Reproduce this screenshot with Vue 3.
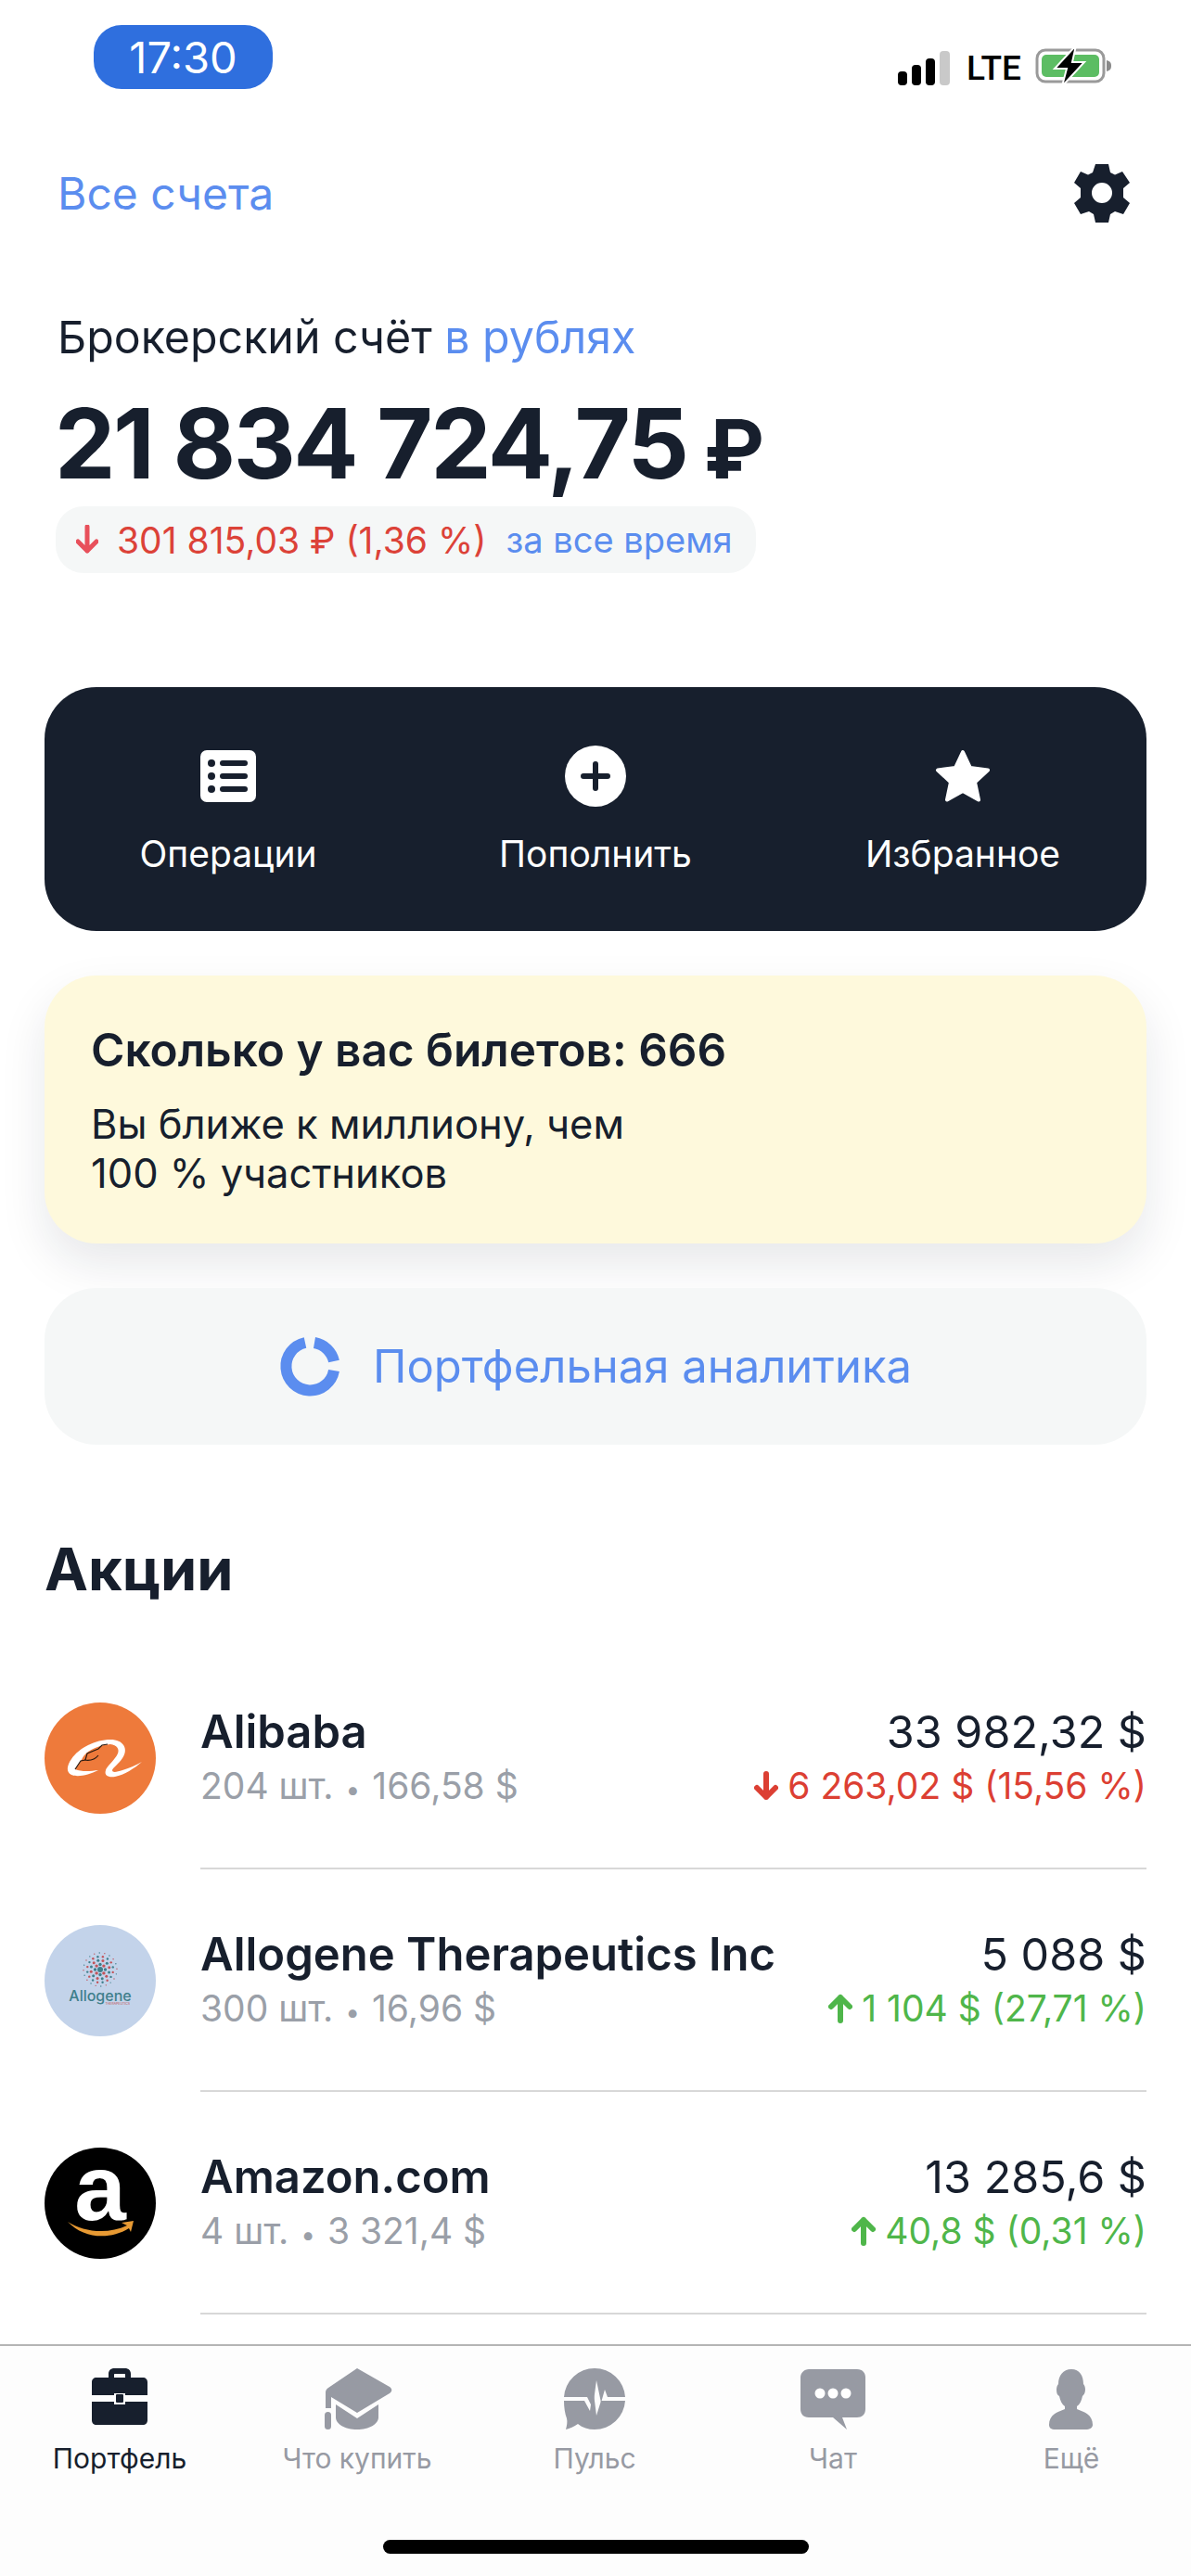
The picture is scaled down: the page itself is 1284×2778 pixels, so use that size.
<template>
  <div class="screen">
    <div class="status">
      <div class="time">17:30</div>
      <div class="status-right">
        <svg width="60" height="38" viewBox="0 0 60 38">
          <rect x="1" y="22" width="10" height="15" rx="4" fill="#000"/>
          <rect x="16" y="15" width="10" height="22" rx="4" fill="#000"/>
          <rect x="31" y="8" width="10" height="29" rx="4" fill="#000"/>
          <rect x="46" y="0" width="11" height="37" rx="4" fill="#c9c9c9"/>
        </svg>
        <span class="lte">LTE</span>
        <svg width="84" height="44" viewBox="0 0 84 44">
          <rect x="2" y="5" width="72" height="34" rx="9" fill="#fff" stroke="#9a9a9a" stroke-width="3"/>
          <rect x="7" y="10" width="62" height="24" rx="5" fill="#5cbd63"/>
          <path d="M77 16c4 1 5 3 5 6s-1 5-5 6z" fill="#8a8a8a"/>
          <path d="M44 0 21 25h13l-5 19 24-26H40z" fill="#000" stroke="#fff" stroke-width="2"/>
        </svg>
      </div>
    </div>

    <div class="main">
      <div class="topbar">
        <a class="link accounts">Все счета</a>
        <svg width="64" height="64" viewBox="0 0 64 64">
          <path fill="#171f2d" fill-rule="evenodd" d="M25 1h14l2 9 5 2.500 8-3.500 8 12-7 6v10l7 6-7 12-9-3-5 3-2 9H25l-2-9-5-3-9 3-7-12 7-6V27l-7-6 7-12 8 3.500 5-2.500zM32 21a11 11 0 1 0 0 22 11 11 0 0 0 0-22z"/>
        </svg>
      </div>

      <div class="account">
        <div class="account-title">Брокерский счёт <span class="link">в рублях</span></div>
        <div class="amount">21 834 724,75 <span class="rub">₽</span></div>
        <div class="change-pill">
          <svg class="arrow" width="24" height="32" viewBox="0 0 24 32"><path d="M12 2v26M2 18l10 10 10-10" fill="none" stroke="#e8505b" stroke-width="5" stroke-linecap="round" stroke-linejoin="round"/></svg>
          <span class="change-val">301 815,03 ₽ (1,36 %)</span>
          <span class="link change-when">за все время</span>
        </div>
      </div>

      <div class="actions">
        <div class="action">
          <div class="action-icon">
            <svg width="60" height="56" viewBox="0 0 60 56">
              <rect width="60" height="56" rx="7" fill="#fff"/>
              <g fill="#171f2d">
                <circle cx="12" cy="14" r="4"/><circle cx="12" cy="28" r="4"/><circle cx="12" cy="42" r="4"/>
                <rect x="21" y="11" width="30" height="6" rx="3"/><rect x="21" y="25" width="30" height="6" rx="3"/><rect x="21" y="39" width="30" height="6" rx="3"/>
              </g>
            </svg>
          </div>
          <span>Операции</span>
        </div>
        <div class="action">
          <div class="action-icon">
            <svg width="66" height="66" viewBox="0 0 66 66">
              <circle cx="33" cy="33" r="33" fill="#fff"/>
              <path d="M33 20v26M20 33h26" stroke="#171f2d" stroke-width="6" stroke-linecap="round"/>
            </svg>
          </div>
          <span>Пополнить</span>
        </div>
        <div class="action">
          <div class="action-icon">
            <svg width="60" height="58" viewBox="0 0 60 58">
              <path d="M30 3l8 17 19 2.500-14 13 4 19-17-9.500-17 9.500 4-19-14-13 19-2.500z" fill="#fff" stroke="#fff" stroke-width="4" stroke-linejoin="round"/>
            </svg>
          </div>
          <span>Избранное</span>
        </div>
      </div>

      <div class="promo">
        <div class="promo-title">Сколько у вас билетов: 666</div>
        <div class="promo-text">Вы ближе к миллиону, чем<br>100 % участников</div>
      </div>

      <div class="analytics">
        <svg width="66" height="66" viewBox="0 0 66 66">
          <path d="M28 7A26 26 0 1 0 59 37" fill="none" stroke="#5b8def" stroke-width="12"/>
          <path d="M38 7a26 26 0 0 1 21 20" fill="none" stroke="#5b8def" stroke-width="12"/>
        </svg>
        <span class="link">Портфельная аналитика</span>
      </div>

      <h2 class="section">Акции</h2>

      <div class="stock" v-for="s in stocks" :key="s.name">
        <div class="logo" :class="s.logo">
          <svg v-if="s.logo === 'ali'" width="120" height="120" viewBox="0 0 120 120">
            <path d="M71 40C85 40 91 50 84 60 80 66 74 70 73 73 73 76 78 75 84 73 91 71 98 68 105 64 97 71 86 78 76 80 69 81 64 79 66 73 66 70 76 62 79 55 81 50 78 46 71 45 60 46 48 50 42 58L38 65 33 72C40 75 50 74 58 73 48 78 36 81 29 78 23 75 24 68 29 61 37 49 55 40 71 40Z" fill="#fff"/>
            <path d="M33 72 39 63 44 62 46 55 58 50 62 46 68 45 M43 62C49 63 54 62 58 57" fill="none" stroke="#2a1a10" stroke-width="1.200"/>
          </svg>
          <svg v-else-if="s.logo === 'allo'" width="120" height="120" viewBox="0 0 120 120">
            <circle v-for="(d, i) in alloDots" :key="i" :cx="d.x" :cy="d.y" :r="d.r" :fill="d.c"/>
            <text x="60" y="82" text-anchor="middle" class="allo-text">Allogene</text>
            <text x="92" y="86" text-anchor="end" class="allo-sub">THERAPEUTICS</text>
          </svg>
          <svg v-else width="120" height="120" viewBox="0 0 120 120">
            <text x="60" y="78" text-anchor="middle" class="amz-text">a</text>
            <path d="M25 80C42 91 68 94 89 84L83 81 96 79 93 91 91 87C70 100 42 98 25 80Z" fill="#e89a33"/>
          </svg>
        </div>
        <div class="stock-body">
          <div class="stock-left">
            <div class="stock-name">{{ s.name }}</div>
            <div class="stock-sub">{{ s.qty }} шт. <span class="dot">•</span> {{ s.price }} $</div>
          </div>
          <div class="stock-right">
            <div class="stock-total">{{ s.total }} $</div>
            <div class="stock-change" :class="s.up ? 'up' : 'down'">
              <svg width="26" height="32" viewBox="0 0 26 32">
                <path v-if="s.up" d="M13 29V4M3 14 13 4l10 10" fill="none" stroke="currentColor" stroke-width="6" stroke-linecap="round" stroke-linejoin="round"/>
                <path v-else d="M13 3v25M3 18l10 10 10-10" fill="none" stroke="currentColor" stroke-width="6" stroke-linecap="round" stroke-linejoin="round"/>
              </svg>
              <span>{{ s.change }}</span>
            </div>
          </div>
        </div>
      </div>
    </div>

    <div class="tabbar">
      <div class="tabs">
        <div class="tab active">
          <svg width="70" height="70" viewBox="0 0 70 70">
            <path fill="currentColor" fill-rule="evenodd" d="M23 12V8c0-4 3-6 6-6h12c3 0 6 2 6 6v4h13c3 0 5 2 5 5v14H41v-2h-12v2H5V17c0-3 2-5 5-5zm6-3v3h12V9c0-.6-.4-1-1-1H30c-.6 0-1 .4-1 1zM5 38h24v3h12v-3h24v20c0 3-2 5-5 5H10c-3 0-5-2-5-5z"/>
            <rect x="31" y="30" width="8" height="9" rx="1" fill="currentColor"/>
          </svg>
          <span>Портфель</span>
        </div>
        <div class="tab">
          <svg width="80" height="70" viewBox="0 0 80 70">
            <path fill="currentColor" d="M40 2 75 22c3 2 3 5 0 7L40 50 12 33v12l-6 0V28c0-2 1-4 3-5z"/>
            <path fill="currentColor" d="M17 41 40 56 63 41v14c0 7-10 13-23 13S17 62 17 55z"/>
            <rect x="5" y="49" width="7" height="19" rx="3.500" fill="currentColor"/>
          </svg>
          <span>Что купить</span>
        </div>
        <div class="tab">
          <svg width="70" height="70" viewBox="0 0 70 70">
            <path fill="currentColor" d="M35 2a33 33 0 0 1 33 31H49l-3-8-4 14-5-24-4 30-6-12-3 0H2A33 33 0 0 1 35 2z"/>
            <path fill="currentColor" d="M2 37h22l6 11 4-27-1 0 4 32 5-16 3 0h23a33 33 0 0 1-33 31c-7 0-13-2-18-6-4 3-9 5-13 6 1-4 2-8 1-12-2-5-3-12-3-19z"/>
          </svg>
          <span>Пульс</span>
        </div>
        <div class="tab">
          <svg width="76" height="70" viewBox="0 0 76 70">
            <path fill="currentColor" d="M12 3h52c6 0 9 4 9 9v34c0 6-4 9-9 9H48l5 13-15-13H12c-6 0-9-4-9-9V12c0-5 4-9 9-9z"/>
            <circle cx="24" cy="29" r="5.500" fill="#fff"/><circle cx="38" cy="29" r="5.500" fill="#fff"/><circle cx="52" cy="29" r="5.500" fill="#fff"/>
          </svg>
          <span>Чат</span>
        </div>
        <div class="tab">
          <svg width="50" height="70" viewBox="0 0 50 70">
            <path fill="currentColor" d="M25 3c9 0 13 7 13 16 1 1 2 3 2 6 0 4-2 6-3 7-1 5-3 9-6 11v3c8 3 17 6 17 17 0 3-3 5-8 5H8c-5 0-7-2-7-5 0-11 9-14 17-17v-3c-3-2-5-6-6-11-2-1-3-3-3-7 0-3 1-5 2-6 0-9 5-16 14-16z"/>
          </svg>
          <span>Ещё</span>
        </div>
      </div>
      <div class="home"></div>
    </div>
  </div>
</template>

<script setup>
const stocks = [
  { name: 'Alibaba', logo: 'ali', qty: '204', price: '166,58', total: '33 982,32', change: '6 263,02 $ (15,56 %)', up: false },
  { name: 'Allogene Therapeutics Inc', logo: 'allo', qty: '300', price: '16,96', total: '5 088', change: '1 104 $ (27,71 %)', up: true },
  { name: 'Amazon.com', logo: 'amz', qty: '4', price: '3 321,4', total: '13 285,6', change: '40,8 $ (0,31 %)', up: true },
];

// кружок из точек для логотипа Allogene
const alloDots = [{ x: 60, y: 48, r: 3, c: '#3f7f8c' }];
[[5.5, 8, 1.7], [10, 12, 1.5], [14, 16, 1.2], [18, 20, 0.7]].forEach(([dist, count, r], ring) => {
  for (let i = 0; i < count; i++) {
    const a = (i / count) * Math.PI * 2 + ring * 0.3;
    alloDots.push({
      x: 60 + Math.cos(a) * dist,
      y: 48 + Math.sin(a) * dist,
      r,
      c: i % 2 ? '#c2545a' : '#3f7f8c',
    });
  }
});
</script>

<style>
html, body {
  margin: 0;
  background: #fff;
}
</style>

<style scoped>
.screen {
  width: 1284px;
  height: 2778px;
  overflow: hidden;
  display: flex;
  flex-direction: column;
  background: #fff;
  color: #171f2d;
  font-family: Inter, "Noto Sans", sans-serif;
}
.status {
  height: 96px;
  padding: 27px 84px 0 101px;
  box-sizing: border-box;
  flex: none;
  display: flex;
  justify-content: space-between;
  align-items: flex-start;
}
.time {
  width: 193px;
  height: 69px;
  border-radius: 30px;
  background: #2f6fde;
  color: #fff;
  font-size: 47px;
  line-height: 69px;
  text-align: center;
}
.status-right {
  display: flex;
  align-items: flex-end;
  gap: 15px;
  padding-top: 22px;
  height: 44px;
}
.lte {
  font-family: Roboto, sans-serif;
  font-size: 37px;
  line-height: 38px;
  color: #000;
  font-weight: 500;
}
.main {
  flex: 1;
  min-height: 0;
  padding: 0 48px;
}
.link {
  color: #5b8def;
}
.topbar {
  display: flex;
  justify-content: space-between;
  align-items: center;
  padding: 80px 16px 0 14px;
  height: 64px;
}
.accounts {
  font-size: 48px;
}
.account {
  padding: 96px 0 0 14px;
}
.account-title {
  font-size: 48.300px;
  line-height: 56px;
}
.amount {
  font-size: 104px;
  font-weight: 700;
  line-height: 120px;
  margin-top: 26px;
  margin-left: -3px;
  letter-spacing: -2.500px;
}
.rub {
  font-size: 88px;
  margin-left: -4px;
}
.change-pill {
  display: inline-flex;
  align-items: center;
  height: 72px;
  margin-top: 2px;
  margin-left: -2px;
  padding: 0 26px 0 22px;
  border-radius: 30px;
  background: #f5f7f7;
  font-size: 39px;
}
.arrow {
  margin-right: 20px;
}
.change-val {
  color: #dc4238;
}
.change-when {
  margin-left: 21px;
  font-size: 38px;
}
.actions {
  display: grid;
  grid-template-columns: repeat(3, 1fr);
  height: 263px;
  margin-top: 123px;
  border-radius: 56px;
  background: #171f2d;
  color: #fff;
}
.action {
  display: flex;
  flex-direction: column;
  align-items: center;
  justify-content: flex-end;
  padding-bottom: 60px;
  gap: 27px;
  font-size: 39px;
}
.action-icon {
  height: 66px;
  display: flex;
  align-items: center;
}
.promo {
  height: 289px;
  box-sizing: border-box;
  margin-top: 48px;
  padding: 48px 50px;
  border-radius: 56px;
  background: #fef9dc;
  box-shadow: 0 22px 50px rgba(23, 31, 45, 0.1);
}
.promo-title {
  font-size: 49.500px;
  font-weight: 600;
  line-height: 64px;
}
.promo-text {
  margin-top: 22px;
  font-size: 43.500px;
  line-height: 53px;
}
.analytics {
  height: 169px;
  margin-top: 48px;
  border-radius: 56px;
  background: #f5f7f7;
  display: flex;
  align-items: center;
  justify-content: center;
  gap: 35px;
  font-size: 49px;
}
.section {
  margin: 98px 0 0;
  font-size: 63px;
  font-weight: 700;
  line-height: 72px;
}
.stock {
  display: flex;
  align-items: stretch;
  height: 240px;
}
.section + .stock {
  margin-top: 48px;
}
.logo {
  flex: none;
  width: 120px;
  height: 120px;
  margin-top: 60px;
  border-radius: 50%;
  overflow: hidden;
}
.ali { background: #ee7a3b; }
.allo { background: #c3d3ea; }
.amz { background: #000; }
.allo-text {
  font-family: Inter, sans-serif;
  font-size: 16px;
  font-weight: 500;
  fill: #3f7f8c;
}
.allo-sub {
  font-family: Inter, sans-serif;
  font-size: 3.500px;
  fill: #c2545a;
}
.amz-text {
  font-family: "Liberation Sans", sans-serif;
  font-size: 100px;
  font-weight: 700;
  fill: #fff;
}
.stock-body {
  flex: 1;
  margin-left: 48px;
  padding-top: 62px;
  display: flex;
  justify-content: space-between;
  align-items: flex-start;
  border-bottom: 2px solid #d8d8d8;
  box-sizing: border-box;
}
.stock-name {
  font-size: 49px;
  font-weight: 600;
  line-height: 60px;
}
.stock-sub {
  font-size: 39px;
  line-height: 56px;
  color: #9a9fa8;
}
.dot {
  margin: 0 2px;
  font-size: 28px;
}
.stock-right {
  text-align: right;
}
.stock-total {
  font-size: 48.500px;
  line-height: 60px;
}
.stock-change {
  display: flex;
  justify-content: flex-end;
  align-items: center;
  gap: 10px;
  font-size: 39px;
  line-height: 56px;
}
.up { color: #4fb64a; }
.down { color: #dc3f33; }
.tabbar {
  flex: none;
  height: 250px;
  box-sizing: border-box;
  border-top: 2px solid #b5b5b5;
  background: #fdfdfd;
  position: relative;
}
.tabs {
  display: grid;
  grid-template-columns: 258px 254px 258px 256px 258px;
  padding-top: 22px;
}
.tab {
  display: flex;
  flex-direction: column;
  align-items: center;
  gap: 11px;
  font-size: 30px;
  line-height: 36px;
  color: #979aa3;
}
.tab.active {
  color: #171f2d;
}
.home {
  position: absolute;
  left: 413px;
  bottom: 24px;
  width: 459px;
  height: 15px;
  border-radius: 8px;
  background: #000;
}
</style>
